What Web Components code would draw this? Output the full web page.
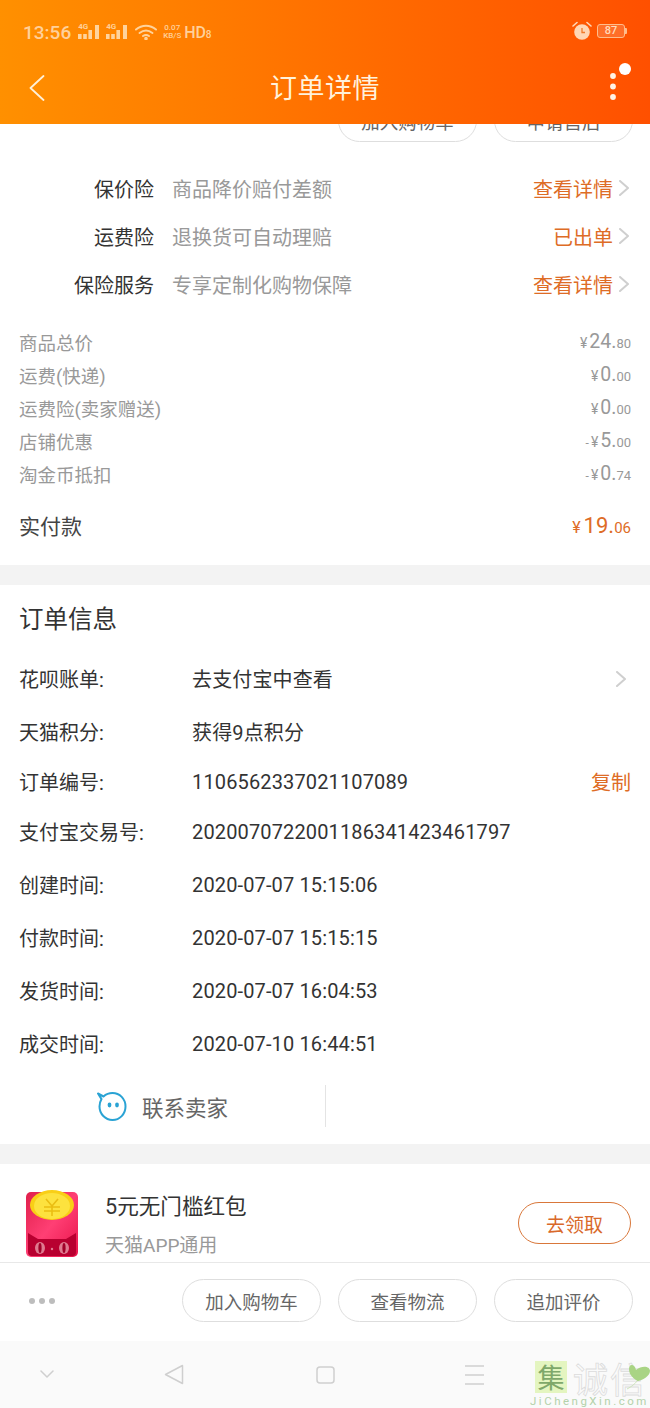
<!DOCTYPE html>
<html lang="zh">
<head>
<meta charset="utf-8">
<title>订单详情</title>
<style>
  html, body { margin: 0; padding: 0; background: #fff; }
  body { font-family: Roboto, "Noto Sans CJK SC", sans-serif; width: 650px; height: 1408px; overflow: hidden; }
</style>
</head>
<body>
<order-page>
  <status-bar slot="top"></status-bar>
  <nav-header slot="top" title="订单详情"></nav-header>

  <div class="clip-row">
    <pill-button width="139">加入购物车</pill-button>
    <pill-button width="139">申请售后</pill-button>
  </div>

  <service-row top="165" label="保价险" desc="商品降价赔付差额" action="查看详情"></service-row>
  <service-row label="运费险" desc="退换货可自动理赔" action="已出单"></service-row>
  <service-row label="保险服务" desc="专享定制化购物保障" action="查看详情"></service-row>

  <price-table>
    <price-row label="商品总价" big="24" small="80"></price-row>
    <price-row label="运费(快递)" big="0" small="00"></price-row>
    <price-row label="运费险(卖家赠送)" big="0" small="00"></price-row>
    <price-row label="店铺优惠" minus big="5" small="00"></price-row>
    <price-row label="淘金币抵扣" minus big="0" small="74"></price-row>
  </price-table>
  <total-row label="实付款" big="19" small="06"></total-row>

  <gray-band></gray-band>

  <order-info>
    <info-row h="53" label="花呗账单:" value="去支付宝中查看" chevron></info-row>
    <info-row h="53" label="天猫积分:" value="获得9点积分"></info-row>
    <info-row h="47" label="订单编号:" value="1106562337021107089" copy="复制"></info-row>
    <info-row h="53" label="支付宝交易号:" value="2020070722001186341423461797"></info-row>
    <info-row h="53" label="创建时间:" value="2020-07-07 15:15:06"></info-row>
    <info-row h="53" label="付款时间:" value="2020-07-07 15:15:15"></info-row>
    <info-row h="53" label="发货时间:" value="2020-07-07 16:04:53"></info-row>
    <info-row h="53" label="成交时间:" value="2020-07-10 16:44:51"></info-row>
  </order-info>
  <contact-bar></contact-bar>

  <gray-band></gray-band>

  <promo-card title="5元无门槛红包" sub="天猫APP通用" action="去领取"></promo-card>

  <action-bar slot="bottom">
    <pill-button width="139">加入购物车</pill-button>
    <pill-button width="139">查看物流</pill-button>
    <pill-button width="139">追加评价</pill-button>
  </action-bar>
  <system-nav slot="bottom"></system-nav>
  <site-mark slot="overlay"></site-mark>
</order-page>

<script>
const CHEVRON = `<svg width="10" height="16" viewBox="0 0 10 16" fill="none"><path d="M1 1l8 7-8 7" stroke="#cfcfcf" stroke-width="2" stroke-linecap="round" stroke-linejoin="round"/></svg>`;

class OrderPage extends HTMLElement {
  connectedCallback() {
    const shadow = this.attachShadow({ mode: 'open' });
    shadow.innerHTML = `
      <style>
        :host { display: flex; flex-direction: column; width: 650px; height: 1408px; position: relative; overflow: hidden; background: #fff; }
        .top { flex: none; background: linear-gradient(90deg, #ff9000, #ff5000); }
        .body { flex: 1; min-height: 0; overflow: hidden; }
        .bottom { flex: none; }
        ::slotted(.clip-row) { display: flex; justify-content: flex-end; gap: 17px; height: 18px; padding-right: 17px; overflow: hidden; align-items: flex-end; }
      </style>
      <div class="top"><slot name="top"></slot></div>
      <div class="body"><slot></slot></div>
      <div class="bottom"><slot name="bottom"></slot></div>
      <slot name="overlay"></slot>
    `;
  }
}

class StatusBar extends HTMLElement {
  connectedCallback() {
    const shadow = this.attachShadow({ mode: 'open' });
    const bars = `<svg width="22" height="16" viewBox="0 0 22 16">
      <g fill="#ffd39c"><rect x="0" y="10" width="3.6" height="5"/><rect x="5.2" y="10" width="3.6" height="5"/><rect x="10.4" y="6" width="3.6" height="9"/><rect x="17" y="1" width="4" height="14"/></g>
    </svg>`;
    shadow.innerHTML = `
      <style>
        :host { display: flex; align-items: center; height: 62px; padding: 2px 23px 0 23px; color: #ffd09a; box-sizing: border-box; }
        .time { font-size: 19px; font-weight: 500; margin-right: 7px; }
        .sig { position: relative; width: 22px; height: 16px; margin-right: 6px; }
        .sig b { position: absolute; left: 0; top: -1px; font: 700 8px/8px Roboto, sans-serif; }
        .sig svg { display: block; }
        .wifi { margin: 0 6px 0 1px; }
        .speed { font-size: 8px; line-height: 8px; font-weight: 500; text-align: center; margin-right: 3px; }
        .hd { font-size: 16px; font-weight: 500; letter-spacing: -.2px; }
        .hd small { font-size: 10px; }
        .right { margin-left: auto; display: flex; align-items: center; gap: 5px; margin-top: -2px; }
        .batt { position: relative; width: 28px; height: 14px; border: 1px solid #ffbd8c; border-radius: 3px; box-sizing: border-box; color: #ffdcbc; background: rgba(255,255,255,.16); font-size: 11px; font-weight: 500; line-height: 12px; text-align: center; margin-right: 2px; }
        .batt::after { content: ""; position: absolute; right: -3px; top: 3px; width: 2px; height: 6px; background: #ffbd8c; border-radius: 0 1px 1px 0; }
      </style>
      <span class="time">13:56</span>
      <span class="sig"><b>4G</b>${bars}</span>
      <span class="sig"><b>4G</b>${bars}</span>
      <svg class="wifi" width="22" height="16" viewBox="0 0 22 16" fill="none" stroke="#ffd39c" stroke-width="2" stroke-linecap="round"><path d="M1 5.5c6-5 14-5 20 0"/><path d="M4.5 9c4-3 9-3 13 0"/><path d="M8 12c2-1.3 4-1.3 6 0"/><circle cx="11" cy="14.5" r=".8" fill="#ffd39c"/></svg>
      <span class="speed">0.07<br>KB/S</span>
      <span class="hd">HD<small>8</small></span>
      <span class="right">
        <svg width="20" height="20" viewBox="0 0 20 20"><path d="M1 5 5 1.5M19 5l-4-3.5" stroke="#ffd6b4" stroke-width="1.6" stroke-linecap="round"/><circle cx="10" cy="11" r="7.8" fill="#ffd6b4"/><path d="M10 7v4.5h3" stroke="#f07a2a" stroke-width="1.3" fill="none"/></svg>
        <span class="batt">87</span>
      </span>
    `;
  }
}

class NavHeader extends HTMLElement {
  connectedCallback() {
    const shadow = this.attachShadow({ mode: 'open' });
    shadow.innerHTML = `
      <style>
        :host { display: flex; align-items: center; justify-content: space-between; height: 62px; padding: 0 34px 0 29px; box-sizing: border-box; position: relative; }
        h1 { margin: 0; font-size: 27px; font-weight: 400; line-height: 50px; color: #fff2dc; letter-spacing: .5px; position: absolute; left: 0; right: 0; text-align: center; top: 2px; }
        svg { display: block; position: relative; }
        .back { top: -5px; }
        .more { top: -6px; }
        .dot { position: absolute; width: 12px; height: 12px; border-radius: 50%; background: #fff; right: 19px; top: 1px; }
      </style>
      <svg class="back" width="16" height="26" viewBox="0 0 16 26" fill="none"><path d="M14.5 1 1.5 13l13 12" stroke="#fff0d8" stroke-width="1.8" stroke-linecap="round" stroke-linejoin="round"/></svg>
      <h1>${this.getAttribute('title')}</h1>
      <svg class="more" width="6" height="28" viewBox="0 0 6 28" fill="#fff3e6"><circle cx="3" cy="3" r="2.9"/><circle cx="3" cy="13.5" r="2.9"/><circle cx="3" cy="24" r="2.9"/></svg>
      <span class="dot"></span>
    `;
  }
}

class PillButton extends HTMLElement {
  connectedCallback() {
    const shadow = this.attachShadow({ mode: 'open' });
    const w = this.getAttribute('width') || 139;
    shadow.innerHTML = `
      <style>
        :host { display: flex; flex: none; align-items: center; justify-content: center; box-sizing: border-box; width: ${w}px; height: 43px; border: 1px solid #dedede; border-radius: 22px; font-size: 18.5px; color: #666; background: #fff; }
      </style>
      <slot></slot>
    `;
  }
}

class ServiceRow extends HTMLElement {
  connectedCallback() {
    const shadow = this.attachShadow({ mode: 'open' });
    shadow.innerHTML = `
      <style>
        :host { display: flex; align-items: center; height: 48px; font-size: 20px; padding-right: 21px; }
        :host([top]) { margin-top: 22px; }
        .label { width: 154px; text-align: right; color: #333; flex: none; }
        .desc { margin-left: 18px; color: #999; flex: 1; }
        .action { color: #de6c26; margin-right: 6px; }
        svg { display: block; }
      </style>
      <span class="label">${this.getAttribute('label')}</span>
      <span class="desc">${this.getAttribute('desc')}</span>
      <span class="action">${this.getAttribute('action')}</span>
      ${CHEVRON}
    `;
  }
}

class PriceTable extends HTMLElement {
  connectedCallback() {
    const shadow = this.attachShadow({ mode: 'open' });
    shadow.innerHTML = `
      <style>:host { display: block; padding: 17px 19px 0; }</style>
      <slot></slot>
    `;
  }
}

const moneyStyle = `
  .money { display: flex; align-items: baseline; }
  .minus { font-size: 12px; margin-right: 2px; }
  .yen { font-size: 14px; margin-right: 2px; }
`;

class PriceRow extends HTMLElement {
  connectedCallback() {
    const shadow = this.attachShadow({ mode: 'open' });
    const minus = this.hasAttribute('minus') ? '<span class="minus">-</span>' : '';
    shadow.innerHTML = `
      <style>
        :host { display: flex; justify-content: space-between; align-items: center; height: 33px; font-size: 18.5px; color: #999; }
        ${moneyStyle}
        .big { font-size: 19.5px; }
        .small { font-size: 13px; }
      </style>
      <span>${this.getAttribute('label')}</span>
      <span class="money">${minus}<span class="yen">¥</span><span class="big">${this.getAttribute('big')}.</span><span class="small">${this.getAttribute('small')}</span></span>
    `;
  }
}

class TotalRow extends HTMLElement {
  connectedCallback() {
    const shadow = this.attachShadow({ mode: 'open' });
    shadow.innerHTML = `
      <style>
        :host { display: flex; justify-content: space-between; align-items: center; height: 40px; margin-top: 15px; margin-bottom: 20px; padding: 0 19px; font-size: 21px; color: #444; }
        ${moneyStyle}
        .money { color: #de6c26; }
        .yen { font-size: 16px; margin-right: 3px; }
        .big { font-size: 22px; }
        .small { font-size: 15px; }
      </style>
      <span>${this.getAttribute('label')}</span>
      <span class="money"><span class="yen">¥</span><span class="big">${this.getAttribute('big')}.</span><span class="small">${this.getAttribute('small')}</span></span>
    `;
  }
}

class GrayBand extends HTMLElement {
  connectedCallback() {
    const shadow = this.attachShadow({ mode: 'open' });
    shadow.innerHTML = `<style>:host { display: block; height: 20px; background: #f3f3f3; }</style>`;
  }
}

class OrderInfo extends HTMLElement {
  connectedCallback() {
    const shadow = this.attachShadow({ mode: 'open' });
    shadow.innerHTML = `
      <style>
        :host { display: block; padding: 0 19px; }
        h2 { margin: 0; padding-top: 1px; height: 66px; line-height: 68px; font-size: 24.5px; font-weight: 400; color: #333; }
      </style>
      <h2>订单信息</h2>
      <slot></slot>
    `;
  }
}

class InfoRow extends HTMLElement {
  connectedCallback() {
    const shadow = this.attachShadow({ mode: 'open' });
    const chevron = this.hasAttribute('chevron') ? CHEVRON : '';
    const copy = this.getAttribute('copy');
    shadow.innerHTML = `
      <style>
        :host { display: flex; align-items: center; height: ${this.getAttribute('h')}px; font-size: 20px; color: #333; }
        .label { width: 173px; flex: none; }
        .value { flex: 1; letter-spacing: .14px; }
        .copy { color: #de6c26; }
        svg { display: block; margin-right: 5px; }
      </style>
      <span class="label">${this.getAttribute('label')}</span>
      <span class="value">${this.getAttribute('value')}</span>
      ${copy ? `<span class="copy">${copy}</span>` : ''}
      ${chevron}
    `;
  }
}

class ContactBar extends HTMLElement {
  connectedCallback() {
    const shadow = this.attachShadow({ mode: 'open' });
    shadow.innerHTML = `
      <style>
        :host { display: flex; height: 74px; box-sizing: border-box; padding-bottom: 2px; align-items: center; }
        .half { box-sizing: border-box; width: 326px; height: 42px; border-right: 1px solid #e4e4e4; display: flex; align-items: center; padding-left: 97px; gap: 14px; font-size: 21.5px; color: #666; }
        svg { display: block; }
      </style>
      <div class="half">
        <svg width="31" height="32" viewBox="0 0 31 32" fill="none">
          <path d="M6.5 6.5C9 4.2 12 3 15.5 3 22.7 3 28.5 8.9 28.5 16.5S22.7 30 15.5 30 2.5 24 2.5 16.5c0-2.8.8-5.3 2-7.4L1 3.5l5.5 3Z" stroke="#2aa3d4" stroke-width="2" stroke-linejoin="round"/>
          <ellipse cx="12.5" cy="15" rx="1.9" ry="2.4" fill="#2aa3d4"/><ellipse cx="20" cy="15" rx="1.9" ry="2.4" fill="#2aa3d4"/>
        </svg>
        <span>联系卖家</span>
      </div>
    `;
  }
}

class PromoCard extends HTMLElement {
  connectedCallback() {
    const shadow = this.attachShadow({ mode: 'open' });
    shadow.innerHTML = `
      <style>
        :host { display: flex; align-items: flex-start; height: 98px; padding: 0 19px 0 26px; box-sizing: border-box; overflow: hidden; }
        svg { display: block; margin-top: 26px; flex: none; }
        .text { margin-left: 27px; flex: 1; padding-top: 24px; }
        .title { font-size: 21.6px; line-height: 38px; color: #333; }
        .sub { font-size: 19px; line-height: 40px; color: #999; }
        .btn { margin-top: 38px; width: 113px; height: 42px; box-sizing: border-box; border: 1px solid #d9773a; border-radius: 21px; color: #d9692a; font-size: 19px; display: flex; align-items: center; justify-content: center; }
      </style>
      <svg width="52" height="67" viewBox="0 0 52 67">
        <defs><linearGradient id="rp" x1="0" y1="0" x2="1" y2="1"><stop offset="0" stop-color="#e0204c"/><stop offset=".5" stop-color="#ff3f74"/><stop offset="1" stop-color="#e8134a"/></linearGradient></defs>
        <rect y="2" width="52" height="65" rx="5" fill="url(#rp)"/>
        <ellipse cx="26" cy="15" rx="22" ry="15" fill="#f9cf16"/>
        <ellipse cx="26" cy="16" rx="18" ry="13" fill="#fde23e"/>
        <path d="M20 9l6 7 6-7M18 17h16M18 21h16M26 16v10" stroke="#eabd12" stroke-width="1.6" fill="none"/>
        <path d="M2 43l10 6h28l10-6v19a4 4 0 0 1-4 4H6a4 4 0 0 1-4-4Z" fill="#b80030"/>
        <ellipse cx="14" cy="58" rx="5" ry="6" fill="#e07a90"/><ellipse cx="38" cy="58" rx="5" ry="6" fill="#e07a90"/>
        <ellipse cx="14" cy="58" rx="1.6" ry="5" fill="#a00028"/><ellipse cx="38" cy="58" rx="1.6" ry="5" fill="#a00028"/>
        <circle cx="26" cy="59" r="1.2" fill="#e07a90"/>
      </svg>
      <div class="text">
        <div class="title">${this.getAttribute('title')}</div>
        <div class="sub">${this.getAttribute('sub')}</div>
      </div>
      <div class="btn">${this.getAttribute('action')}</div>
    `;
  }
}

class ActionBar extends HTMLElement {
  connectedCallback() {
    const shadow = this.attachShadow({ mode: 'open' });
    shadow.innerHTML = `
      <style>
        :host { display: flex; align-items: center; gap: 17px; height: 79px; box-sizing: border-box; border-top: 1px solid #e8e8e8; padding: 0 17px 3px 29px; background: #fff; }
        .dots { display: flex; gap: 4px; margin-right: auto; }
        .dots i { width: 6px; height: 6px; border-radius: 50%; background: #bdbdbd; }
      </style>
      <div class="dots"><i></i><i></i><i></i></div>
      <slot></slot>
    `;
  }
}

class SystemNav extends HTMLElement {
  connectedCallback() {
    const shadow = this.attachShadow({ mode: 'open' });
    shadow.innerHTML = `
      <style>
        :host { display: grid; grid-template-columns: 94px 160px 142px 156px; align-items: center; height: 67px; background: #fafafa; }
        svg { display: block; justify-self: center; }
      </style>
      <svg width="14" height="9" viewBox="0 0 14 9" fill="none" stroke="#cfcfcf" stroke-width="1.5" stroke-linecap="round" stroke-linejoin="round"><path d="M1 1l6 6 6-6"/></svg>
      <svg width="20" height="21" viewBox="0 0 20 21" fill="none" stroke="#cfcfcf" stroke-width="1.5" stroke-linejoin="round"><path d="M18.5 1.5v18L1.5 10.5Z"/></svg>
      <svg width="19" height="18" viewBox="0 0 19 18" fill="none" stroke="#cfcfcf" stroke-width="1.5"><rect x="1" y="1" width="17" height="16" rx="3"/></svg>
      <svg width="19" height="20" viewBox="0 0 19 20" fill="none" stroke="#cfcfcf" stroke-width="1.4"><path d="M0 1h19M0 10h19M0 19h19"/></svg>
    `;
  }
}

class SiteMark extends HTMLElement {
  connectedCallback() {
    const shadow = this.attachShadow({ mode: 'open' });
    shadow.innerHTML = `
      <style>
        :host { position: absolute; left: 530px; top: 1360px; width: 120px; height: 48px; display: block; }
        .row { display: flex; align-items: center; height: 34px; padding-left: 5px; }
        .box { width: 32px; height: 32px; background: #e4f5c0; display: flex; align-items: center; justify-content: center; color: #7fa86a; font-size: 27px; line-height: 32px; flex: none; font-family: "Noto Sans CJK SC", sans-serif; }
        .cn { margin-left: 6px; font-size: 35px; line-height: 33px; letter-spacing: 2px; color: transparent; -webkit-text-stroke: .8px #dcdcdc; white-space: nowrap; font-family: "Noto Sans CJK SC", sans-serif; }
        .en { font-size: 11.5px; line-height: 14px; letter-spacing: 2.5px; color: #b4d2aa; white-space: nowrap; }
        svg { position: absolute; right: 0; top: 1px; }
      </style>
      <div class="row"><span class="box">集</span><span class="cn">诚信</span></div>
      <div class="en">JiChengXin.com</div>
      <svg width="24" height="30" viewBox="0 0 24 30" fill="none"><path d="M1 28c4-2 8-5 11-9" stroke="#cfe4bd" stroke-width="1"/><path d="M10 9C9 3 3 2 3 8s5 10 9 12c5-1 12-5 12-10 0-5-8-6-14-1Z" fill="#a9d484"/></svg>
    `;
  }
}

customElements.define('order-page', OrderPage);
customElements.define('status-bar', StatusBar);
customElements.define('nav-header', NavHeader);
customElements.define('pill-button', PillButton);
customElements.define('service-row', ServiceRow);
customElements.define('price-table', PriceTable);
customElements.define('price-row', PriceRow);
customElements.define('total-row', TotalRow);
customElements.define('gray-band', GrayBand);
customElements.define('order-info', OrderInfo);
customElements.define('info-row', InfoRow);
customElements.define('contact-bar', ContactBar);
customElements.define('promo-card', PromoCard);
customElements.define('action-bar', ActionBar);
customElements.define('system-nav', SystemNav);
customElements.define('site-mark', SiteMark);
</script>
</body>
</html>
